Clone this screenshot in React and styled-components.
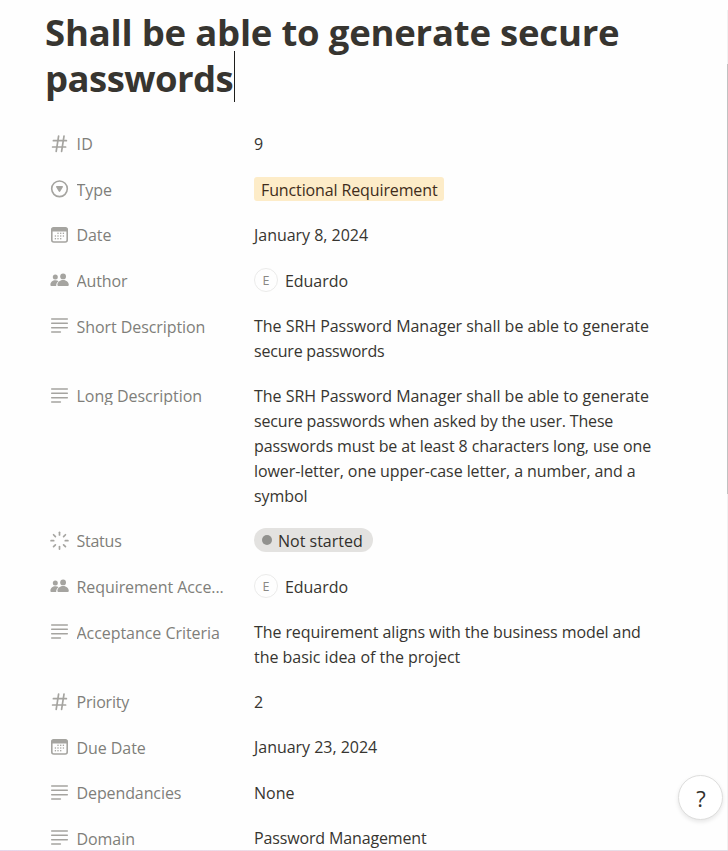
import React from 'react';
import styled, { createGlobalStyle } from 'styled-components';

const GlobalStyle = createGlobalStyle`
  * { box-sizing: border-box; }
  body {
    margin: 0;
    background: #fefefe;
    color: #373530;
    font-family: "Open Sans", "Noto Sans", sans-serif;
    overflow: hidden;
  }
`;

const Page = styled.main`
  position: relative;
  height: 851px;
  padding: 9px 0 0 45px;
  overflow: hidden;
`;

const Title = styled.h1`
  margin: 0 0 30px;
  font-size: 36.5px;
  line-height: 46px;
  font-weight: 700;
`;

const TitleLine = styled.span`
  display: flex;
  align-items: center;
  height: 46px;
  letter-spacing: ${(p) => p.$spacing}px;
  white-space: nowrap;
`;

const Caret = styled.i`
  width: 1px;
  height: 51px;
  margin: -3px 0 0 1px;
  flex: none;
  background: #1e1e1c;
`;

const Row = styled.div`
  display: flex;
  align-items: flex-start;
  height: ${(p) => p.$height}px;
  padding-left: 5px;
  font-size: 16px;
  line-height: 27px;
`;

const IconBox = styled.span`
  display: flex;
  flex: none;
  width: 26.5px;
  padding-top: 3px;
  color: #a5a4a0;
`;

const Label = styled.span`
  flex: none;
  width: 177.5px;
  height: ${(p) => (p.$clipped ? 22 : 26)}px;
  margin-top: ${(p) => (p.$low ? 1 : 0)}px;
  overflow: hidden;
  color: #7f7e7a;
  letter-spacing: ${(p) => p.$spacing ?? -0.07}px;
  white-space: nowrap;
`;

const Value = styled.div`
  display: flex;
  flex-direction: column;
  align-items: flex-start;
`;

const Line = styled.span`
  height: 25px;
  letter-spacing: ${(p) => p.$spacing ?? 0}px;
  white-space: nowrap;
`;

const Tag = styled.span`
  height: 24px;
  width: 190px;
  padding-left: 7px;
  border-radius: 3px;
  background: #fdecc8;
  color: #402c1b;
  letter-spacing: -0.12px;
  white-space: nowrap;
`;

const Pill = styled.span`
  display: flex;
  width: 119px;
  height: 24px;
  padding-left: 8px;
  border-radius: 12px;
  background: #e3e2e0;
  color: #32302c;
  white-space: nowrap;
`;

const Dot = styled.i`
  width: 10px;
  height: 10px;
  margin: 7px 6px 0 0;
  border-radius: 50%;
  background: #91918e;
`;

const Person = styled.span`
  display: flex;
  gap: 7px;
  letter-spacing: -0.05px;
`;

const Avatar = styled.span`
  width: 24px;
  height: 24px;
  border: 1px solid #ebebea;
  border-radius: 50%;
  color: #898884;
  font-size: 12.5px;
  line-height: 23px;
  text-align: center;
`;

const HelpButton = styled.button`
  position: absolute;
  left: 678px;
  top: 775px;
  width: 45px;
  height: 45px;
  padding: 1px 0 0 1px;
  border: 1px solid #dededd;
  border-radius: 50%;
  background: #fff;
  box-shadow: 0 2px 4px rgba(15, 15, 15, 0.1);
  color: #32302c;
  font: 500 22px/43px "Open Sans", sans-serif;
`;

const ScrollTrack = styled.div`
  position: absolute;
  right: 0;
  top: 10px;
  width: 1px;
  height: 840px;
  padding-top: 54px;
  background: #f1f1f1;
`;

const ScrollThumb = styled.div`
  height: 430px;
  background: #c1c1c1;
`;

const BottomEdge = styled.div`
  position: absolute;
  left: 0;
  right: 0;
  bottom: 0;
  height: 1px;
  background: linear-gradient(90deg, #e6d6ea, #efdce6 40%, #e4dce6);
`;

const Glyph = ({ children }) => (
  <svg width="19" height="20" viewBox="0 0 19 20" fill="none" stroke="currentColor">
    {children}
  </svg>
);

const calendarDots = [
  [8, 8.3], [10.7, 8.3], [13.4, 8.3],
  [5.4, 11], [8, 11], [10.7, 11], [13.4, 11],
  [5.4, 13.7], [8, 13.7], [10.7, 13.7],
];

const icons = {
  number: (
    <Glyph>
      <path d="M8.6 2.2 6.2 17.400M14 2.200l-2.400 15.200M3.400 6.700h13M2.600 13h13" strokeWidth="1.7" strokeLinecap="round" />
    </Glyph>
  ),
  select: (
    <Glyph>
      <circle cx="9.5" cy="8.8" r="7.8" strokeWidth="1.6" />
      <path d="M6.9 6.100h5.200c.7 0 1.100.6.7 1.200l-2.600 4.300c-.3.500-1.100.500-1.400 0L6.200 7.300c-.4-.6 0-1.200.7-1.200Z" fill="currentColor" stroke="none" />
    </Glyph>
  ),
  date: (
    <Glyph>
      <rect x="1.8" y="2.800" width="15.400" height="14.200" rx="2" strokeWidth="1.6" />
      <path d="M1.400 6.600V4.400c0-1.100.9-2 2-2h12.200c1.100 0 2 .9 2 2v2.200Z" fill="currentColor" stroke="none" />
      {calendarDots.map(([x, y]) => (
        <rect key={`${x}-${y}`} x={x - 0.65} y={y - 0.65} width="1.3" height="1.3" fill="currentColor" stroke="none" />
      ))}
    </Glyph>
  ),
  person: (
    <Glyph>
      <g fill="currentColor" stroke="none">
        <circle cx="5.3" cy="5.9" r="2.5" />
        <circle cx="13.1" cy="5.4" r="2.9" />
        <path d="M.4 13.500c0-2.200 2.100-4.300 5-4.300 1.300 0 2.400.4 3.200 1.100-1.500 1-2.400 2.600-2.400 4.100 0 .2 0 .4.1.6H1.600c-.8 0-1.200-.5-1.200-1.500Z" />
        <path d="M7.400 13.700c0-2.300 2.300-4.800 5.700-4.800s5.700 2.500 5.700 4.800c0 .9-.5 1.300-1.500 1.300H8.900c-1 0-1.500-.4-1.500-1.300Z" />
      </g>
    </Glyph>
  ),
  text: (
    <Glyph>
      <path d="M1.700 3h15.600M1.700 7.300h15.600M1.700 11.700h15.600M1.700 16h8.700" strokeWidth="1.5" strokeLinecap="round" />
    </Glyph>
  ),
  status: (
    <Glyph>
      <g strokeWidth="1.7" strokeLinecap="round">
        {[0, 45, 90, 135, 180, 225, 270, 315].map((a) => (
          <path key={a} d="M9.500 1.300v2.600" transform={`rotate(${a} 9.500 9.700)`} />
        ))}
      </g>
    </Glyph>
  ),
};

const Eduardo = () => (
  <Person>
    <Avatar>E</Avatar>
    <span>Eduardo</span>
  </Person>
);

const lines = (...items) => items.map(([text, spacing]) => (
  <Line key={text} $spacing={spacing}>{text}</Line>
));

const properties = [
  { label: 'ID', icon: 'number', height: 46, value: lines(['9']), spacing: 0.2 },
  { label: 'Type', icon: 'select', height: 45, value: <Tag>Functional Requirement</Tag> },
  { label: 'Date', icon: 'date', height: 46, value: lines(['January 8, 2024', -0.03]) },
  { label: 'Author', icon: 'person', height: 45, value: <Eduardo />, spacing: -0.1 },
  {
    label: 'Short Description', icon: 'text', height: 70, low: true,
    value: lines(['The SRH Password Manager shall be able to generate', -0.03], ['secure passwords', -0.2]),
  },
  {
    label: 'Long Description', icon: 'text', height: 145, clipped: true, spacing: -0.03,
    value: lines(
      ['The SRH Password Manager shall be able to generate', -0.03],
      ['secure passwords when asked by the user. These', -0.17],
      ['passwords must be at least 8 characters long, use one', -0.1],
      ['lower-letter, one upper-case letter, a number, and a', -0.08],
      ['symbol', -0.05],
    ),
  },
  { label: 'Status', icon: 'status', height: 46, value: <Pill><Dot />Not started</Pill>, spacing: -0.25 },
  { label: 'Requirement Acce...', icon: 'person', height: 45, value: <Eduardo /> },
  {
    label: 'Acceptance Criteria', icon: 'text', height: 70, low: true, spacing: -0.05,
    value: lines(['The requirement aligns with the business model and', -0.09], ['the basic idea of the project', -0.02]),
  },
  { label: 'Priority', icon: 'number', height: 45, value: lines(['2']), spacing: -0.18 },
  { label: 'Due Date', icon: 'date', height: 46, low: true, value: lines(['January 23, 2024', -0.03]) },
  { label: 'Dependancies', icon: 'text', height: 45, value: lines(['None']), spacing: -0.1 },
  { label: 'Domain', icon: 'text', height: 26, low: true, value: lines(['Password Management', -0.14]) },
];

export default function App() {
  return (
    <>
      <GlobalStyle />
      <Page>
        <Title>
          <TitleLine $spacing={-0.21}>Shall be able to generate secure</TitleLine>
          <TitleLine $spacing={-0.55}>passwords<Caret /></TitleLine>
        </Title>
        {properties.map((p) => (
          <Row key={p.label} $height={p.height}>
            <IconBox>{icons[p.icon]}</IconBox>
            <Label $low={p.low} $clipped={p.clipped} $spacing={p.spacing}>{p.label}</Label>
            <Value>{p.value}</Value>
          </Row>
        ))}
        <HelpButton>?</HelpButton>
        <ScrollTrack><ScrollThumb /></ScrollTrack>
        <BottomEdge />
      </Page>
    </>
  );
}
